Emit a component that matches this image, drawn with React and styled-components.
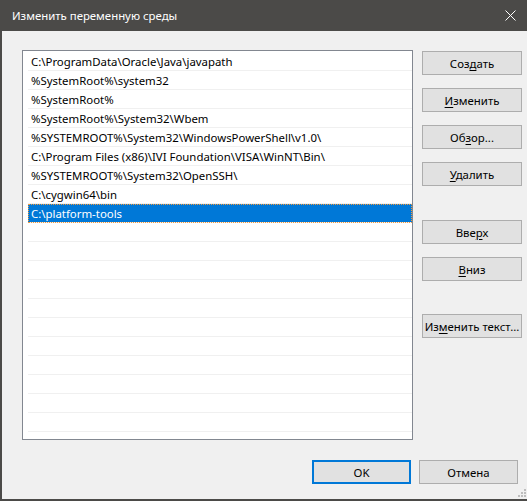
import React from 'react';
import styled, { createGlobalStyle } from 'styled-components';

const Global = createGlobalStyle`
  html, body { margin: 0; padding: 0; background: #f0f0f0; }
  body { font-family: "Segoe UI", "Noto Sans", sans-serif; }
  * { box-sizing: border-box; }
`;

const Window = styled.div`
  width: 527px;
  height: 501px;
  display: flex;
  flex-direction: column;
  overflow: hidden;
`;

const TitleBar = styled.div`
  height: 31px;
  flex: none;
  background: #4b4a48;
  display: flex;
  align-items: center;
  padding: 0 11px 0 12px;
  color: #ffffff;
  font-size: 11.4px;
`;

const Title = styled.span`
  flex: 1;
  white-space: nowrap;
`;

const Body = styled.div`
  position: relative;
  flex: 1;
  background: #f0f0f0;
  border-left: 2px solid #4b4a48;
  border-bottom: 2px solid #4b4a48;
  display: flex;
  flex-direction: column;
  padding: 19px 0 0 20px;
`;

const Main = styled.div`
  display: flex;
  gap: 9px;
`;

const List = styled.div`
  width: 391px;
  height: 390px;
  background: #ffffff;
  border: 1px solid #828790;
  padding: 1px 0 0 5px;
  overflow: hidden;
`;

const Row = styled.div`
  height: 19px;
  border-bottom: 1px solid #f0f0f0;
  padding: 1px 0 0 3px;
  font-size: 11.4px;
  line-height: 17px;
  white-space: nowrap;
  color: ${p => (p.$selected ? '#ffffff' : '#000000')};
  background: ${p => (p.$selected ? '#0078d7' : 'transparent')};
  outline: ${p => (p.$selected ? '1px dotted #f39a3c' : 'none')};
  outline-offset: -1px;
`;

const Side = styled.div`
  display: flex;
  flex-direction: column;
  gap: 13px;
  padding-top: 1px;
`;

const Button = styled.button`
  width: ${p => p.$w || 100}px;
  height: 24px;
  margin-top: ${p => p.$mt || 0}px;
  padding: 0;
  background: #e1e1e1;
  border: ${p => (p.$default ? '2px solid #0078d7' : '1px solid #adadad')};
  font-family: "Segoe UI", "Noto Sans", sans-serif;
  font-size: 11.4px;
  color: #000000;
  white-space: nowrap;
  text-align: center;
`;

const U = styled.span`
  text-decoration: underline;
  text-underline-offset: 2px;
`;

const Footer = styled.div`
  display: flex;
  justify-content: flex-end;
  gap: 8px;
  margin-top: 20px;
  padding-right: 9px;
`;

const Grip = styled.svg`
  position: absolute;
  right: 1px;
  bottom: 2px;
`;

const items = [
  'C:\\ProgramData\\Oracle\\Java\\javapath',
  '%SystemRoot%\\system32',
  '%SystemRoot%',
  '%SystemRoot%\\System32\\Wbem',
  '%SYSTEMROOT%\\System32\\WindowsPowerShell\\v1.0\\',
  'C:\\Program Files (x86)\\IVI Foundation\\VISA\\WinNT\\Bin\\',
  '%SYSTEMROOT%\\System32\\OpenSSH\\',
  'C:\\cygwin64\\bin',
  'C:\\platform-tools',
];

export default function App() {
  const rows = [];
  for (let i = 0; i < 21; i++) rows.push(items[i] || '');
  return (
    <>
      <Global />
      <Window>
        <TitleBar>
          <Title>Изменить переменную среды</Title>
          <svg width="11" height="11" viewBox="0 0 11 11">
            <path d="M0.5 0.5 L10.5 10.5 M10.5 0.5 L0.5 10.5" stroke="#ffffff" strokeWidth="1" />
          </svg>
        </TitleBar>
        <Body>
          <Main>
            <List>
              {rows.map((t, i) => (
                <Row key={i} $selected={i === 8}>{t}</Row>
              ))}
            </List>
            <Side>
              <Button>Соз<U>д</U>ать</Button>
              <Button><U>И</U>зменить</Button>
              <Button>Об<U>з</U>ор...</Button>
              <Button><U>У</U>далить</Button>
              <Button $mt={21}>Вве<U>р</U>х</Button>
              <Button><U>В</U>низ</Button>
              <Button $mt={20}>Из<U>м</U>енить текст...</Button>
            </Side>
          </Main>
          <Footer>
            <Button $w={99} $default>OK</Button>
            <Button $w={99}>Отмена</Button>
          </Footer>
          <Grip width="9" height="9" viewBox="0 0 9 9">
            <g fill="#bdbdbd">
              <rect x="7" y="1" width="2" height="2" />
              <rect x="4" y="4" width="2" height="2" />
              <rect x="7" y="4" width="2" height="2" />
              <rect x="1" y="7" width="2" height="2" />
              <rect x="4" y="7" width="2" height="2" />
              <rect x="7" y="7" width="2" height="2" />
            </g>
          </Grip>
        </Body>
      </Window>
    </>
  );
}
